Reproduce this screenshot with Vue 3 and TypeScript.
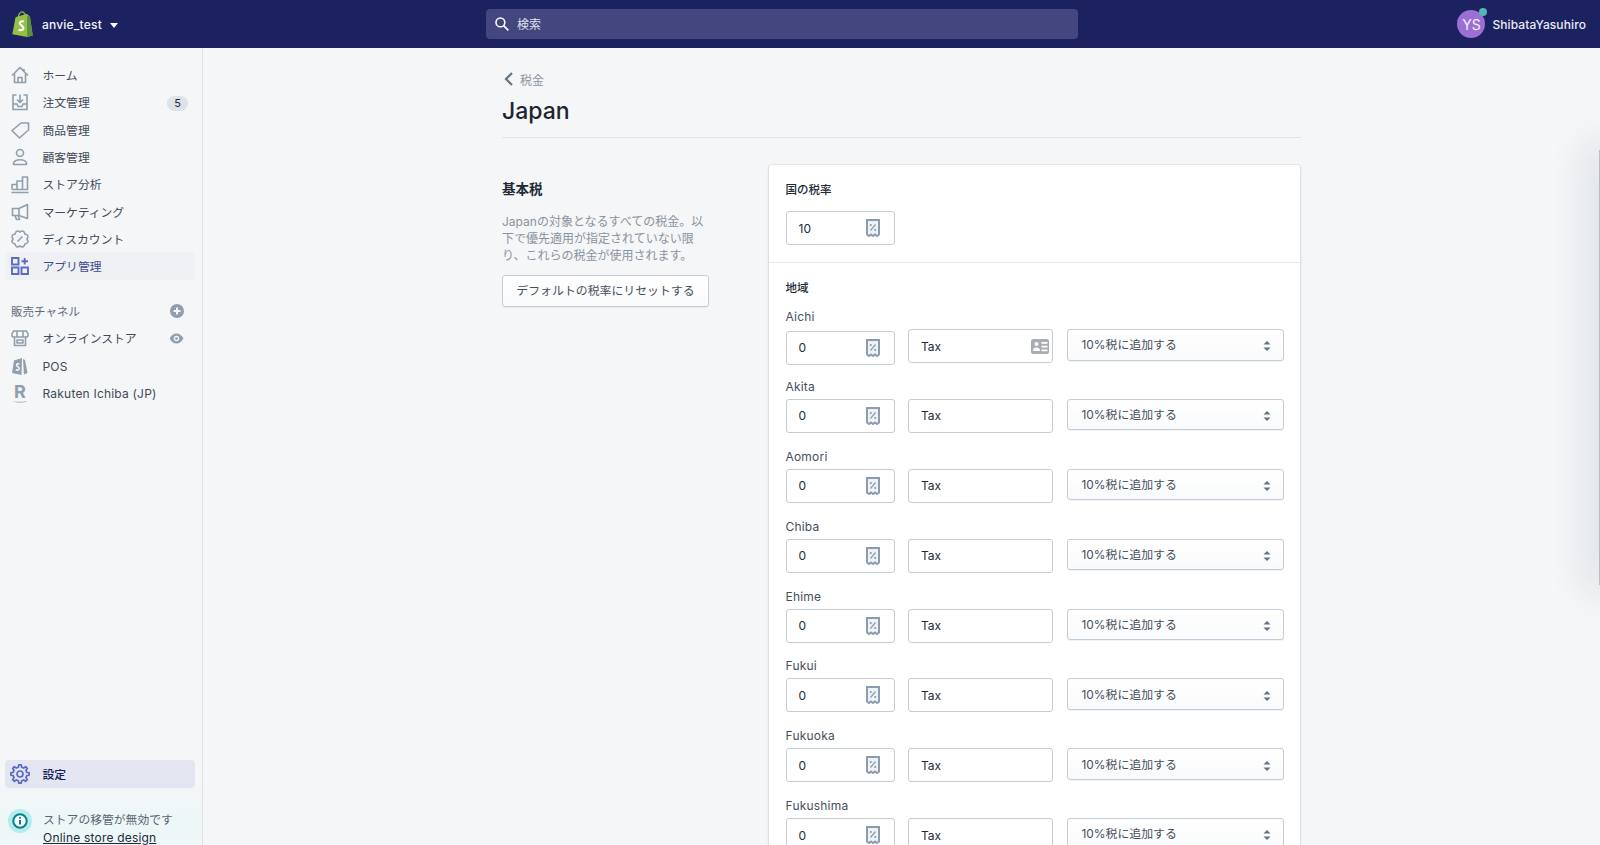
<script setup lang="ts">
interface NavItem { label: string; icon: string; badge?: string; active?: boolean }

const pt = (r: number, a: number) => `${(10 + r * Math.cos(a)).toFixed(2)} ${(10 + r * Math.sin(a)).toFixed(2)}`

function cog(teeth: number, outer: number, inner: number): string {
  const step = (Math.PI * 2) / teeth
  let d = ''
  for (let i = 0; i < teeth; i++) {
    const a = i * step - Math.PI / 2
    d += `${i === 0 ? 'M' : 'L'}${pt(inner, a - step * 0.3)}L${pt(outer, a - step * 0.17)}L${pt(outer, a + step * 0.17)}L${pt(inner, a + step * 0.3)}`
  }
  return d + 'Z'
}

function scallop(lobes: number, control: number, inner: number): string {
  const step = (Math.PI * 2) / lobes
  let d = `M${pt(inner, -Math.PI / 2)}`
  for (let i = 0; i < lobes; i++) {
    const a = i * step - Math.PI / 2
    d += `Q${pt(control, a + step / 2)} ${pt(inner, a + step)}`
  }
  return d + 'Z'
}

const icons: Record<string, string> = {
  home: 'M2 10.500 10 2.500l8 8M4.500 8.500v9h11v-9M8 17.500v-5h4v5M14 4v2.500',
  orders: 'M6.500 3H3v14.500h14V3h-3.500M3 12h4l1 2.500h4l1-2.500h4M10 2.500V10M7 7.500l3 3 3-3',
  tag: 'M11 3h7.500v7l-9 8-7.500-7.500zM14.500 6.200v.4',
  customer: 'M10 2.500a3.500 3.500 0 1 1 0 7 3.500 3.500 0 0 1 0-7zM3.500 17.500v-1.200c0-2.200 3-3.600 6.500-3.600s6.500 1.400 6.500 3.600v1.200z',
  analytics: 'M1.500 18.500h17M2 15.500v-5h5M2 15.500h15.500V3h-5v12.500M7 15.500V7h5.500',
  marketing: 'M17.500 2.500v14L9 13.500H2.500v-7H9zM9 6.500v7M5 13.500l1.500 4h3l-1.200-3.800',
  discount: scallop(8, 10.400, 7) + 'M12.500 7.500l-5 5M7.500 7.600v.1M12.500 12.300v.1',
  apps: 'M2 2h6.500v6.500H2zM2 11.500h6.500V18H2zM11.500 11.500H18V18h-6.500zM14.700 2v6.500M11.500 5.200H18',
  store: 'M3.500 3h13l1.500 3v1.500c0 1-1 1.500-2 1.500H4c-1 0-2-.5-2-1.500V6zM7 3v6M13 3v6M4.500 9v8.500h11V9M7 12h6v3H7z',
  settings: cog(8, 9.200, 7) + 'M10 7a3 3 0 1 1 0 6 3 3 0 0 1 0-6z'
}

const mainNav: NavItem[] = [
  { label: 'ホーム', icon: 'home' },
  { label: '注文管理', icon: 'orders', badge: '5' },
  { label: '商品管理', icon: 'tag' },
  { label: '顧客管理', icon: 'customer' },
  { label: 'ストア分析', icon: 'analytics' },
  { label: 'マーケティング', icon: 'marketing' },
  { label: 'ディスカウント', icon: 'discount' },
  { label: 'アプリ管理', icon: 'apps', active: true }
]

const regions = ['Aichi', 'Akita', 'Aomori', 'Chiba', 'Ehime', 'Fukui', 'Fukuoka', 'Fukushima']
</script>

<template>
  <div class="app">
    <header class="topbar">
      <div class="brand">
        <svg class="logo" viewBox="0 0 24 28" width="23" height="26">
          <path d="M16.500 3 4.500 6.800 1 25l16 3 6-1.600L20 6z" fill="#95bf47" />
          <path d="M17 28l6-1.600L20 6l-3-1.500z" fill="#5e8e3e" />
          <path d="M7.500 7c0-3 2-6 4-6s3 1.500 3.500 4.500" fill="none" stroke="#95bf47" stroke-width="1.300" />
          <path d="M13.500 11.500c-1-.6-4.500-.8-4.500 1.700 0 2.300 4 2.300 4 5 0 2.500-3 3.200-5.200 1.800" fill="none" stroke="#fff" stroke-width="2.300" />
        </svg>
        <span class="store-name">anvie_test</span>
        <span class="caret"></span>
      </div>
      <div class="search">
        <svg viewBox="0 0 20 20" width="16" height="16" fill="none" stroke="#fff" stroke-width="2">
          <circle cx="8" cy="8" r="5.500" />
          <path d="M12 12l6 6" />
        </svg>
        <span>検索</span>
      </div>
      <div class="user">
        <span class="avatar">YS<i class="dot"></i></span>
        <span class="user-name">ShibataYasuhiro</span>
      </div>
    </header>

    <div class="body">
      <aside class="sidebar">
        <nav class="nav">
          <a v-for="item in mainNav" :key="item.label" class="nav-item" :class="{ active: item.active }">
            <svg class="nav-icon" viewBox="0 0 20 20" width="20" height="20"><path :d="icons[item.icon]" /></svg>
            <span class="nav-label">{{ item.label }}</span>
            <span v-if="item.badge" class="badge">{{ item.badge }}</span>
          </a>
        </nav>

        <div class="channels-head">
          <span>販売チャネル</span>
          <svg viewBox="0 0 16 16" width="16" height="16">
            <circle cx="8" cy="8" r="7" fill="#919eab" />
            <path d="M8 4.500v7M4.500 8h7" stroke="#f4f6f8" stroke-width="2" />
          </svg>
        </div>
        <nav class="nav">
          <a class="nav-item">
            <svg class="nav-icon" viewBox="0 0 20 20" width="20" height="20"><path :d="icons.store" /></svg>
            <span class="nav-label">オンラインストア</span>
            <svg class="eye" viewBox="0 0 16 12" width="15" height="11">
              <path d="M0.500 6C2.500 2.300 5 .5 8 .5s5.500 1.800 7.500 5.500c-2 3.700-4.500 5.500-7.500 5.500S2.500 9.700.5 6z" fill="#919eab" />
              <circle cx="8" cy="6" r="3" fill="#f4f6f8" />
              <circle cx="8" cy="6" r="1.500" fill="#919eab" />
            </svg>
          </a>
          <a class="nav-item">
            <svg class="nav-icon-fill" viewBox="0 0 20 20" width="20" height="20">
              <path d="M12 2 4 4.500 2 17l9.500 2z" fill="#919eab" />
              <path d="M13 3l2 1 2.500 13-3.500 1.500z" fill="#919eab" />
              <path d="M9.500 8c-.8-.4-3-.4-3 1.200 0 1.500 2.700 1.500 2.700 3.300 0 1.700-2 2.100-3.400 1.200" fill="none" stroke="#f4f6f8" stroke-width="1.500" />
            </svg>
            <span class="nav-label latin">POS</span>
          </a>
          <a class="nav-item">
            <span class="rakuten">R<svg viewBox="0 0 18 3" width="16" height="3"><path d="M1 .8c5 1.300 10 1.300 16 0-3 2.500-12 2.500-16 0z" fill="#919eab" /></svg></span>
            <span class="nav-label latin">Rakuten Ichiba (JP)</span>
          </a>
        </nav>

        <div class="sidebar-bottom">
          <a class="nav-item settings">
            <svg class="nav-icon" viewBox="0 0 20 20" width="20" height="20"><path :d="icons.settings" /></svg>
            <span class="nav-label">設定</span>
          </a>
          <div class="notice">
            <span class="notice-icon"><svg viewBox="0 0 16 16" width="16" height="16">
              <circle cx="8" cy="8" r="6.700" fill="#fff" stroke="#00848e" stroke-width="2" />
              <path d="M8 7v4.500" stroke="#00848e" stroke-width="2" />
              <circle cx="8" cy="4.800" r="1.100" fill="#00848e" />
            </svg></span>
            <div class="notice-text">
              <div>ストアの移管が無効です</div>
              <a>Online store design</a>
            </div>
          </div>
        </div>
      </aside>

      <main class="main">
        <div class="content">
          <div class="breadcrumb">
            <svg viewBox="0 0 10 16" width="10" height="16" fill="none" stroke="#637381" stroke-width="2.200"><path d="M8 2 2 8l6 6" /></svg>
            <span>税金</span>
          </div>
          <h1 class="title">Japan</h1>

          <div class="layout">
            <section class="intro">
              <h2>基本税</h2>
              <p>Japanの対象となるすべての税金。以下で優先適用が指定されていない限り、これらの税金が使用されます。</p>
              <button class="reset" type="button"><span>デフォルトの税率にリセットする</span></button>
            </section>

            <section class="card">
              <div class="card-section first">
                <div class="heading">国の税率</div>
                <div class="field rate">
                  <span>10</span>
                  <svg class="receipt" viewBox="0 0 14 18" width="14" height="18">
                    <path d="M1 1h12v14.500l-2 1.500-2-1.500-2 1.500-2-1.500-2 1.500-2-1.500z" fill="#eff2f5" stroke="#8c9bb0" stroke-width="2" />
                    <path d="M9.500 5.500l-5 6" stroke="#8c9bb0" stroke-width="1.200" />
                    <circle cx="4.800" cy="6" r="1.100" fill="#8c9bb0" /><circle cx="9.200" cy="11" r="1.100" fill="#8c9bb0" />
                  </svg>
                </div>
              </div>
              <div class="card-section second">
                <div class="heading regions-title">地域</div>
                <div v-for="(name, i) in regions" :key="name" class="region">
                  <div class="region-label">{{ name }}</div>
                  <div class="region-row">
                    <div class="field rate" :class="{ nudged: i === 0 }">
                      <span>0</span>
                      <svg class="receipt" viewBox="0 0 14 18" width="14" height="18">
                        <path d="M1 1h12v14.500l-2 1.500-2-1.500-2 1.500-2-1.500-2 1.500-2-1.500z" fill="#eff2f5" stroke="#8c9bb0" stroke-width="2" />
                        <path d="M9.500 5.500l-5 6" stroke="#8c9bb0" stroke-width="1.200" />
                        <circle cx="4.800" cy="6" r="1.100" fill="#8c9bb0" /><circle cx="9.200" cy="11" r="1.100" fill="#8c9bb0" />
                      </svg>
                    </div>
                    <div class="field">
                      <span>Tax</span>
                      <svg v-if="i === 0" class="idcard" viewBox="0 0 18 15" width="18" height="15">
                        <rect width="18" height="15" rx="2" fill="#a9adb3" />
                        <circle cx="5.500" cy="5" r="2" fill="#fff" />
                        <path d="M2 12c0-2.500 1.500-3.500 3.500-3.500S9 9.500 9 12z" fill="#fff" />
                        <path d="M10.500 3h6v1.700h-6zM10.500 6.800h6v1.700h-6zM10.500 10.500h6v1.700h-6z" fill="#fff" />
                      </svg>
                    </div>
                    <div class="select">
                      <span class="select-text">10%税に追加する</span>
                      <svg viewBox="0 0 8 12" width="8" height="12">
                        <path d="M4 1 7.500 4.500h-7z" fill="#637381" />
                        <path d="M4 11 .5 7.500h7z" fill="#637381" />
                      </svg>
                    </div>
                  </div>
                </div>
              </div>
            </section>
          </div>
        </div>
      </main>
    </div>
    <div class="edge-panel"></div>
  </div>
</template>

<style>
html, body { background: #f4f6f8; }
</style>

<style scoped>
.app {
  position: relative;
  height: 845px;
  overflow: hidden;
  background: #f4f6f8;
  font-family: Inter, "Noto Sans CJK JP", sans-serif;
  font-size: 12px;
  color: #212b36;
}
.topbar {
  height: 48px;
  box-sizing: border-box;
  display: flex;
  align-items: center;
  background: #1c2260;
  color: #fff;
}
.brand {
  width: 486px;
  display: flex;
  align-items: center;
  padding-left: 11px;
  box-sizing: border-box;
}
.store-name { margin-left: 8px; font-weight: 500; letter-spacing: 0.2px; color: #f1f2f8; }
.caret {
  margin-left: 8px;
  margin-top: 2px;
  border-left: 4.500px solid transparent;
  border-right: 4.500px solid transparent;
  border-top: 5px solid #fff;
}
.search {
  width: 592px;
  height: 30px;
  background: #43467f;
  border-radius: 4px;
  display: flex;
  align-items: center;
  gap: 7px;
  padding-left: 8px;
  box-sizing: border-box;
  color: #dfe0ec;
}
.search span { margin-top: -1px; }
.user { margin-left: auto; display: flex; align-items: center; padding-right: 14px; }
.avatar {
  position: relative;
  width: 28px;
  height: 28px;
  border-radius: 50%;
  background: #9c6fd6;
  display: flex;
  align-items: center;
  justify-content: center;
  font-size: 14px;
  color: #f5f0fb;
}
.dot {
  position: absolute;
  right: -2px;
  top: -2px;
  width: 8px;
  height: 8px;
  border-radius: 50%;
  background: #50b8b4;
}
.user-name { margin-left: 7px; font-weight: 500; letter-spacing: 0.1px; color: #ebebf6; }
.body { display: flex; height: 797px; }
.sidebar {
  width: 203px;
  flex: none;
  box-sizing: border-box;
  border-right: 1.500px solid #dfe3e8;
  padding: 13.400px 7px 0 5px;
  display: flex;
  flex-direction: column;
  background: linear-gradient(#f4f6f8 735px, #ecf7f7 775px, #f0f7f8);
}
.nav { display: flex; flex-direction: column; }
.nav-item {
  height: 27.300px;
  display: flex;
  align-items: center;
  border-radius: 4px;
  padding: 0 7px 0 5px;
  color: #3f4a56;
  font-size: 11.800px;
}
.nav-label { margin-left: 12.500px; white-space: nowrap; margin-top: -1px; }
.latin { letter-spacing: 0.2px; font-size: 12px; margin-top: 1px; }
.nav-icon { fill: none; stroke: #919eab; stroke-width: 1.600; flex: none; stroke-linejoin: round; }
.nav-icon-fill { flex: none; }
.nav-item.active { background: #eef0f4; color: #3d4a8f; }
.nav-item.active .nav-icon { stroke: #5c6ac4; stroke-width: 1.900; stroke-linejoin: miter; }
.badge {
  margin-left: auto;
  margin-top: 2px;
  width: 21px;
  height: 15px;
  border-radius: 8px;
  background: #dfe3e8;
  text-align: center;
  line-height: 15px;
  font-size: 11px;
  color: #212b36;
}
.channels-head {
  display: flex;
  align-items: center;
  justify-content: space-between;
  height: 18px;
  margin-top: 22.700px;
  margin-bottom: 4.300px;
  padding: 0 10px 0 6px;
  color: #5f6b78;
  font-size: 11.500px;
}
.eye { margin-left: auto; margin-right: 4px; }
.rakuten {
  width: 20px;
  display: flex;
  flex-direction: column;
  align-items: center;
  font-size: 18px;
  font-weight: 700;
  line-height: 17px;
  color: #919eab;
  flex: none;
}
.rakuten svg { display: block; }
.sidebar-bottom { margin-top: auto; }
.settings { background: #e3e5f1; margin-bottom: 19.500px; color: #101a5c; font-weight: 500; }
.settings .nav-icon { stroke: #5c6ac4; stroke-width: 1.700; }
.notice { display: flex; padding: 0 0 0 3px; height: 38px; }
.notice-icon {
  width: 24px;
  height: 24px;
  margin-top: 2px;
  border-radius: 50%;
  background: #b7ecec;
  display: flex;
  align-items: center;
  justify-content: center;
  flex: none;
}
.notice-text { margin-left: 11px; line-height: 17px; color: #5a6570; white-space: nowrap; padding-top: 5px; font-size: 11.800px; }
.notice-text a { color: #212b36; text-decoration: underline; letter-spacing: 0.2px; font-size: 12px; }
.main { flex: 1; min-width: 0; }
.content { width: 799px; margin: 0 auto; padding-top: 22px; }
.breadcrumb { height: 18px; display: flex; align-items: center; gap: 6px; color: #8b949e; padding-left: 2px; }
.title {
  margin: 7px 0 0;
  height: 42px;
  box-sizing: content-box;
  font-size: 23px;
  line-height: 32px;
  font-weight: 500;
  color: #1c2530;
  border-bottom: 1px solid #dfe3e8;
}
.layout { display: flex; margin-top: 27px; }
.intro { width: 267px; flex: none; padding-top: 15.500px; box-sizing: border-box; }
.intro h2 { margin: 0; font-size: 13.500px; line-height: 17px; font-weight: 600; color: #212b36; }
.intro p {
  width: 207px;
  margin: 15px 0 0;
  line-height: 17.300px;
  color: #8a939d;
}
.reset {
  margin-top: 10.500px;
  width: 207px;
  height: 32px;
  padding: 0;
  border: 1px solid #c4cdd5;
  border-radius: 3px;
  background: linear-gradient(#fff, #f9fafb);
  box-shadow: 0 1px 0 rgba(22, 29, 37, .05);
  font: inherit;
  font-size: 11.900px;
  color: #454f5b;
}
.reset span { position: relative; top: -1.500px; }
.card {
  flex: 1;
  height: 900px;
  margin-right: 1px;
  background: #fff;
  border-radius: 3px;
  box-shadow: 0 0 0 1px rgba(63, 63, 68, .05), 0 1px 3px rgba(63, 63, 68, .2);
}
.card-section { padding: 16.500px 16.500px 0; }
.first { padding-bottom: 17px; border-bottom: 1px solid #e6e9ed; }
.second { padding-top: 17px; }
.heading { height: 17px; line-height: 17px; font-weight: 500; font-size: 11.500px; color: #212b36; }
.first .heading { margin-bottom: 12.500px; }
.regions-title { margin-bottom: 11px; }
.region { height: 69.900px; }
.region-label { height: 17px; line-height: 17px; margin-bottom: 4px; color: #454f5b; letter-spacing: 0.2px; }
.region-row {
  display: grid;
  grid-template-columns: 109px 145px 217px;
  column-gap: 13.500px;
  align-items: start;
}
.field {
  height: 34px;
  box-sizing: border-box;
  border: 1px solid #c4cdd5;
  border-radius: 3px;
  background: #fff;
  display: flex;
  align-items: center;
  justify-content: space-between;
  padding: 0 2px 0 12px;
  color: #212b36;
}
.rate { width: 109px; padding-right: 14px; }
.nudged { margin-top: 1.500px; }
.idcard { margin-right: 1px; }
.select {
  height: 31.500px;
  box-sizing: border-box;
  border: 1px solid #c4cdd5;
  border-radius: 3px;
  background: linear-gradient(#fff, #f9fafb);
  box-shadow: 0 1px 0 rgba(22, 29, 37, .05);
  display: flex;
  align-items: center;
  justify-content: space-between;
  padding: 0 12px 0 14px;
  color: #454f5b;
  font-size: 11.900px;
}
.select-text { margin-top: -2px; }
.select svg { margin-top: 3px; }
.edge-panel {
  position: absolute;
  right: -3px;
  top: 150px;
  width: 4px;
  height: 435px;
  background: #b9bcc0;
  box-shadow: 0 0 40px 8px rgba(33, 43, 54, .16);
}
</style>
